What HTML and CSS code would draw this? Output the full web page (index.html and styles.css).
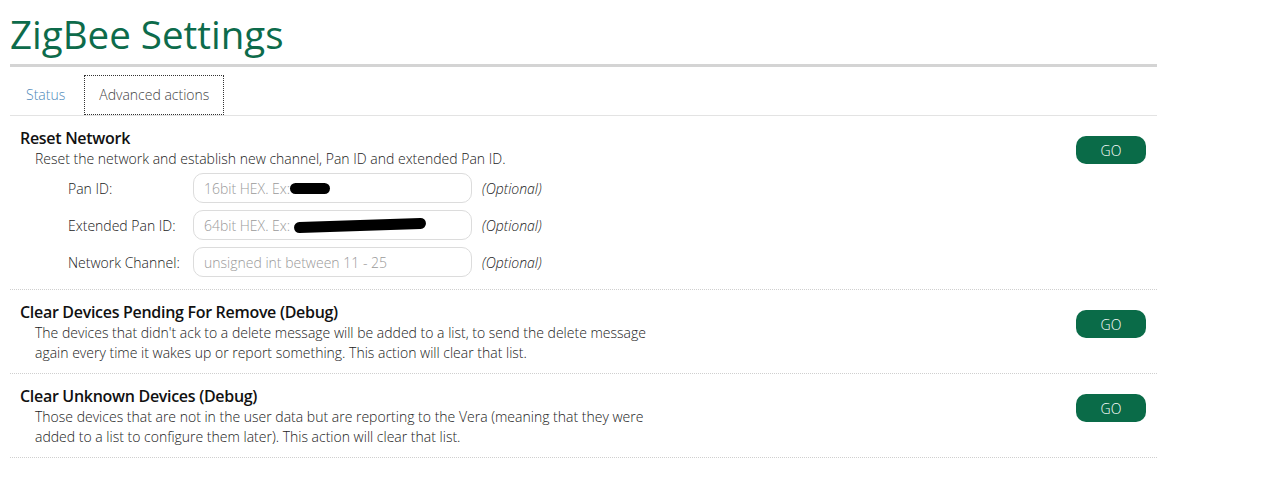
FILE: index.html
```html
<!DOCTYPE html>
<html>
<head>
<meta charset="utf-8">
<title>ZigBee Settings</title>
<link rel="stylesheet" href="styles.css">
</head>
<body>
<div class="page">
  <h1 class="title">ZigBee Settings</h1>
  <div class="tabs">
    <a class="tab">Status</a>
    <a class="tab active">Advanced actions</a>
  </div>

  <div class="action">
    <div class="action-body">
      <h2>Reset Network</h2>
      <p>Reset the network and establish new channel, Pan ID and extended Pan ID.</p>
      <div class="form">
        <label>Pan ID:</label>
        <div class="field"><span class="ph">16bit HEX. Ex:</span><span class="blot short"></span></div>
        <em>(Optional)</em>
        <label>Extended Pan ID:</label>
        <div class="field"><span class="ph">64bit HEX. Ex:</span><span class="blot long"></span></div>
        <em>(Optional)</em>
        <label>Network Channel:</label>
        <div class="field"><span class="ph">unsigned int between 11 - 25</span></div>
        <em>(Optional)</em>
      </div>
    </div>
    <button class="go">GO</button>
  </div>

  <div class="action">
    <div class="action-body">
      <h2>Clear Devices Pending For Remove (Debug)</h2>
      <p>The devices that didn't ack to a delete message will be added to a list, to send the delete message<br>again every time it wakes up or report something. This action will clear that list.</p>
    </div>
    <button class="go">GO</button>
  </div>

  <div class="action">
    <div class="action-body">
      <h2>Clear Unknown Devices (Debug)</h2>
      <p>Those devices that are not in the user data but are reporting to the Vera (meaning that they were<br>added to a list to configure them later). This action will clear that list.</p>
    </div>
    <button class="go">GO</button>
  </div>
</div>
</body>
</html>
```

FILE: styles.css
```css
body {
  margin: 0;
  padding: 0;
  background: #fff;
  font-family: 'Open Sans', sans-serif;
  color: #222;
}

h1, h2, p {
  margin: 0;
}

.page {
  width: 1147px;
  padding-left: 10px;
}

.title {
  font-weight: 400;
  font-size: 38.5px;
  line-height: 48px;
  padding-top: 10px;
  color: #0d6b4b;
  padding-bottom: 6px;
  border-bottom: 3px solid #d4d4d4;
}

.tabs {
  display: flex;
  padding-top: 8px;
  padding-left: 5px;
  border-bottom: 1px solid #e3e3e3;
}

.tab {
  font-size: 14px;
  font-weight: 300;
  padding: 10px 10px 10px 11px;
  line-height: 20px;
  color: #4d88b9;
}

.tab.active {
  color: #444;
  border: 1px dotted #333;
  margin-left: 9px;
  padding: 9px 14px;
}

.action {
  display: flex;
  justify-content: space-between;
  align-items: flex-start;
  border-bottom: 1px dotted #cfcfcf;
  padding: 11px 10px 10px 10px;
}

.action h2 {
  font-size: 16px;
  font-weight: 600;
  letter-spacing: -0.3px;
  line-height: 22px;
  color: #111;
}

.action p {
  font-size: 14px;
  font-weight: 300;
  line-height: 20px;
  padding-left: 15px;
  color: #222;
}

.form {
  display: grid;
  grid-template-columns: 115px 279px auto;
  column-gap: 10px;
  row-gap: 7px;
  align-items: center;
  padding-left: 48px;
  padding-top: 4px;
  padding-bottom: 2px;
}

.form label {
  font-size: 14px;
  font-weight: 300;
  color: #222;
}

.field {
  height: 28px;
  border: 1px solid #dcdcdc;
  border-radius: 10px;
  display: flex;
  align-items: center;
  padding-left: 10px;
  font-size: 14px;
  font-weight: 300;
}

.ph {
  color: #9a9a9a;
}

.blot {
  display: inline-block;
  background: #000;
  height: 11px;
  border-radius: 6px;
}

.blot.short {
  width: 40px;
}

.blot.long {
  width: 132px;
  margin-left: 4px;
  transform: rotate(-2deg);
}

.form em {
  font-size: 14px;
  font-weight: 300;
  color: #222;
}

.go {
  width: 70px;
  height: 28px;
  border: 0;
  border-radius: 10px;
  background: #0a6b48;
  color: #fff;
  font-family: 'Open Sans', sans-serif;
  font-weight: 300;
  font-size: 14px;
  margin-top: 9px;
  margin-right: 1px;
}
```
